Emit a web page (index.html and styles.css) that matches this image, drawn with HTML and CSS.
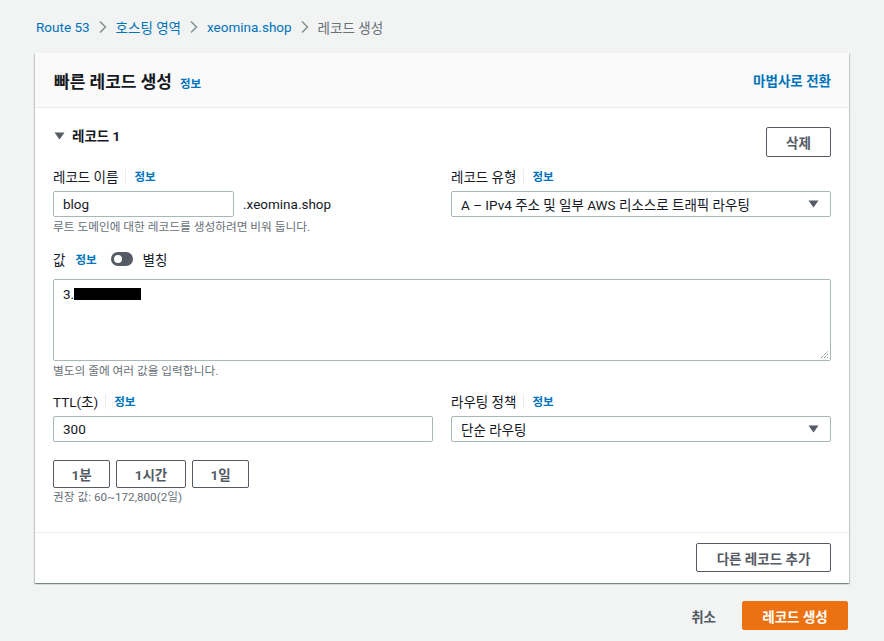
FILE: index.html
```html
<!DOCTYPE html>
<html lang="ko">
<head>
<meta charset="utf-8">
<title>빠른 레코드 생성</title>
<link rel="stylesheet" href="styles.css">
</head>
<body>
<nav class="breadcrumb">
  <a class="crumb-link">Route 53</a>
  <svg class="chev" width="10" height="14" viewBox="0 0 10 14"><path d="M2 1.5 L7.5 7 L2 12.5" fill="none" stroke="#879596" stroke-width="1.6"/></svg>
  <a class="crumb-link">호스팅 영역</a>
  <svg class="chev" width="10" height="14" viewBox="0 0 10 14"><path d="M2 1.5 L7.5 7 L2 12.5" fill="none" stroke="#879596" stroke-width="1.6"/></svg>
  <a class="crumb-link">xeomina.shop</a>
  <svg class="chev" width="10" height="14" viewBox="0 0 10 14"><path d="M2 1.5 L7.5 7 L2 12.5" fill="none" stroke="#879596" stroke-width="1.6"/></svg>
  <span class="crumb-current">레코드 생성</span>
</nav>

<section class="card">
  <header class="card-header">
    <h1 class="card-title">빠른 레코드 생성 <a class="info">정보</a></h1>
    <a class="wizard-link">마법사로 전환</a>
  </header>

  <div class="card-body">
    <div class="record-head">
      <div class="record-title">
        <svg width="11" height="8" viewBox="0 0 11 8"><path d="M0.5 0.5 H10.5 L5.5 7.5 Z" fill="#545b64"/></svg>
        <span>레코드 1</span>
      </div>
      <button class="btn btn-small">삭제</button>
    </div>

    <div class="grid">
      <div class="field">
        <div class="label-row"><span class="label">레코드 이름</span><span class="sep"></span><a class="info">정보</a></div>
        <div class="name-row">
          <div class="input name-input">blog</div>
          <span class="suffix">.xeomina.shop</span>
        </div>
        <div class="help">루트 도메인에 대한 레코드를 생성하려면 비워 둡니다.</div>
      </div>
      <div class="field">
        <div class="label-row"><span class="label">레코드 유형</span><span class="sep"></span><a class="info">정보</a></div>
        <div class="input select">
          <span>A – IPv4 주소 및 일부 AWS 리소스로 트래픽 라우팅</span>
          <svg width="11" height="8" viewBox="0 0 11 8"><path d="M0.5 0.5 H10.5 L5.5 7.5 Z" fill="#545b64"/></svg>
        </div>
      </div>
    </div>

    <div class="value-row">
      <span class="label">값</span>
      <a class="info">정보</a>
      <span class="toggle"><span class="knob"></span></span>
      <span class="label">별칭</span>
    </div>
    <div class="textarea">
      <span>3.</span><span class="redact"></span>
      <svg class="grip" width="9" height="9" viewBox="0 0 9 9"><path d="M1 8 L8 1 M4 8 L8 4 M7 8 L8 7" stroke="#545b64" stroke-width="1" stroke-dasharray="1 1"/></svg>
    </div>
    <div class="help">별도의 줄에 여러 값을 입력합니다.</div>

    <div class="grid grid-ttl">
      <div class="field">
        <div class="label-row"><span class="label">TTL(초)</span><span class="sep"></span><a class="info">정보</a></div>
        <div class="input">300</div>
      </div>
      <div class="field">
        <div class="label-row"><span class="label">라우팅 정책</span><span class="sep"></span><a class="info">정보</a></div>
        <div class="input select">
          <span>단순 라우팅</span>
          <svg width="11" height="8" viewBox="0 0 11 8"><path d="M0.5 0.5 H10.5 L5.5 7.5 Z" fill="#545b64"/></svg>
        </div>
      </div>
    </div>

    <div class="ttl-buttons">
      <button class="btn btn-ttl w57">1분</button>
      <button class="btn btn-ttl w70">1시간</button>
      <button class="btn btn-ttl w57">1일</button>
    </div>
    <div class="help help-tight">권장 값: 60~172,800(2일)</div>
  </div>

  <footer class="card-footer">
    <button class="btn btn-add">다른 레코드 추가</button>
  </footer>
</section>

<div class="actions">
  <a class="cancel">취소</a>
  <button class="btn-primary">레코드 생성</button>
</div>
</body>
</html>
```

FILE: styles.css
```css
* { box-sizing: border-box; }

body {
  margin: 0;
  padding: 0 35px;
  background: #f2f3f3;
  font-family: Roboto, "Noto Sans CJK KR", "Noto Sans", sans-serif;
  font-size: 13.5px;
  color: #16191f;
}

a { cursor: pointer; }

.breadcrumb {
  height: 53px;
  display: flex;
  align-items: center;
  gap: 8px;
  padding-left: 1px;
  font-size: 13.5px;
}
.crumb-link { color: #0073bb; }
.crumb-current { color: #687078; }
.chev { display: block; margin: 0 0; }

.card {
  background: #fff;
  box-shadow: 0 1px 1px 0 rgba(0, 28, 36, 0.3), 1px 1px 1px 0 rgba(0, 28, 36, 0.15), -1px 1px 1px 0 rgba(0, 28, 36, 0.15);
}

.card-header {
  height: 55px;
  background: #fafafa;
  border-bottom: 1px solid #eaeded;
  display: flex;
  align-items: center;
  justify-content: space-between;
  padding: 0 18px 0 19px;
}
.card-title {
  margin: 0;
  font-size: 17px;
  font-weight: 700;
  display: flex;
  align-items: baseline;
  gap: 8px;
}
.info {
  color: #0073bb;
  font-size: 11.5px;
  font-weight: 700;
}
.wizard-link {
  color: #0073bb;
  font-weight: 700;
  font-size: 13.5px;
}

.card-body {
  padding: 19px 18px 28px 18px;
}

.record-head {
  display: flex;
  align-items: flex-start;
  justify-content: space-between;
  height: 30px;
  margin-bottom: 10px;
}
.record-title {
  display: flex;
  align-items: center;
  gap: 7px;
  font-weight: 700;
  font-size: 13.5px;
  line-height: 18px;
  padding-left: 1px;
}
.record-title svg { display: block; }

.btn {
  background: #fff;
  border: 1px solid #545b64;
  border-radius: 2px;
  color: #545b64;
  font-family: inherit;
  font-weight: 700;
  font-size: 13.5px;
  padding: 0;
  cursor: pointer;
}
.btn-small { width: 65px; height: 30px; }

.grid {
  display: grid;
  grid-template-columns: 380px 380px;
  column-gap: 18px;
}
.grid-ttl { margin-top: 14px; }

.label-row {
  display: flex;
  align-items: center;
  height: 18px;
  margin-bottom: 6px;
}
.label { font-size: 13.5px; color: #16191f; }
.sep {
  width: 1px;
  height: 15px;
  background: #eaeded;
  margin: 0 8px 0 7px;
}

.input {
  height: 26px;
  border: 1px solid #aab7b8;
  border-radius: 2px;
  background: #fff;
  display: flex;
  align-items: center;
  padding: 0 9px;
  font-size: 13.5px;
}
.name-row {
  display: flex;
  align-items: center;
  gap: 9px;
}
.name-input { width: 181px; }
.suffix { font-size: 13.5px; color: #16191f; padding-bottom: 1px; }

.select {
  justify-content: space-between;
  padding-right: 11px;
}
.select svg { display: block; }

.help {
  font-size: 11.7px;
  color: #687078;
  line-height: 14px;
  margin-top: 3px;
}
.help-tight { margin-top: 2px; }

.value-row {
  display: flex;
  align-items: center;
  height: 20px;
  margin-top: 15px;
  margin-bottom: 10px;
}
.value-row .info { margin-left: 10px; }
.toggle {
  width: 22px;
  height: 14px;
  border-radius: 7px;
  background: #545b64;
  margin: 0 10px 0 14px;
  position: relative;
}
.knob {
  position: absolute;
  left: 3px;
  top: 3px;
  width: 8px;
  height: 8px;
  border-radius: 50%;
  background: #fff;
}

.textarea {
  position: relative;
  height: 82px;
  border: 1px solid #aab7b8;
  border-radius: 2px;
  padding: 5px 9px;
  display: flex;
  align-items: flex-start;
  line-height: 18px;
  font-size: 13.5px;
}
.redact {
  display: inline-block;
  width: 67px;
  height: 12px;
  background: #000;
  margin-top: 3px;
}
.grip {
  position: absolute;
  right: 1px;
  bottom: 1px;
}

.ttl-buttons {
  display: flex;
  gap: 6px;
  margin-top: 18px;
}
.btn-ttl { height: 28px; }
.w57 { width: 57px; }
.w70 { width: 70px; }

.card-footer {
  border-top: 1px solid #eaeded;
  padding: 10px 18px 11px;
  display: flex;
  justify-content: flex-end;
}
.btn-add { width: 135px; height: 29px; }

.actions {
  display: flex;
  justify-content: flex-end;
  align-items: center;
  margin-top: 18px;
  gap: 26px;
  padding-right: 1px;
}
.cancel {
  color: #545b64;
  font-weight: 700;
  font-size: 13.5px;
}
.btn-primary {
  width: 106px;
  height: 29px;
  background: #ec7211;
  border: 1px solid #ec7211;
  border-radius: 2px;
  color: #fff;
  font-family: inherit;
  font-weight: 700;
  font-size: 13.5px;
  padding: 0;
}
```
